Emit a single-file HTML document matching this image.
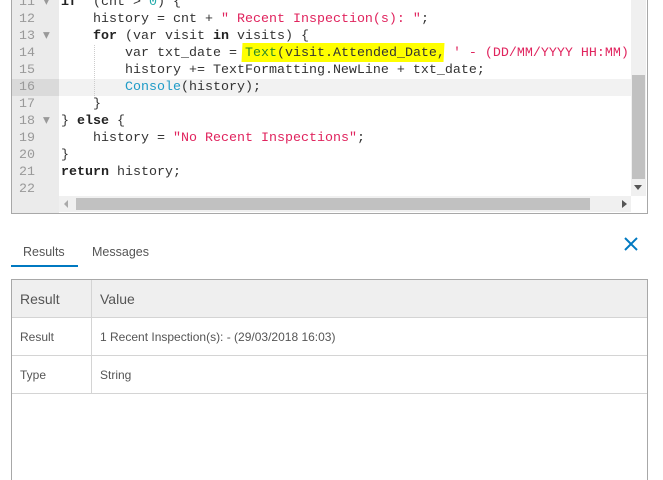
<!DOCTYPE html>
<html><head><style>
body{margin:0;width:663px;height:472px;background:#fff;position:relative;overflow:hidden;font-family:"Liberation Sans",sans-serif}
.ed{position:absolute;left:11px;top:-10px;width:635px;height:223px;border:1px solid #a8a8a8;border-top:none;background:#fff;overflow:hidden}
.gut{position:absolute;left:0;top:0;width:47px;height:223px;background:#ebebeb}
.ln{position:absolute;left:0;width:47px;height:17px;font:13.33px/17px "Liberation Mono",monospace;color:#999;text-indent:7px}
.cl{position:absolute;left:49px;height:17px;font:13.33px/17px "Liberation Mono",monospace;color:#333;white-space:pre}
b{font-weight:bold;color:#222}
.s{color:#e0245e}.f{color:#1e9bc7}.g{color:#2a8a2a}
.hl{position:absolute;left:230px;top:53px;width:202px;height:19px;background:#ffff00;transform:skewX(-3deg)}
.vs{position:absolute;left:619px;top:0;width:15px;height:206px;background:#f0f0f0}
.hs{position:absolute;left:47px;top:206px;width:572px;height:16px;background:#f0f0f0}
.tab{position:absolute;top:245px;font-size:12.5px;color:#555}
td{border:1px solid #d4d4d4;padding:0 0 0 8px;font-size:12px;color:#555;height:37px}
</style></head><body>
<div class="ed">
<div class="gut"></div>
<div style="position:absolute;left:0;top:89px;width:47px;height:17px;background:#dadada"></div>
<div style="position:absolute;left:47px;top:89px;width:572px;height:17px;background:#f2f2f2"></div>
<div class="hl"></div>
<div style="position:absolute;left:82px;top:55px;width:1px;height:51px;border-left:1px dotted #ccc"></div>
<div class="ln" style="top:4px">11 ▾</div><div class="cl" style="top:4px"><b>if</b>  (cnt &gt; <span style="color:#2aa">0</span>) {</div>
<div class="ln" style="top:21px">12</div><div class="cl" style="top:21px">    history = cnt + <span class="s">" Recent Inspection(s): "</span>;</div>
<div class="ln" style="top:38px">13 ▾</div><div class="cl" style="top:38px">    <b>for</b> (var visit <b>in</b> visits) {</div>
<div class="ln" style="top:55px">14</div><div class="cl" style="top:55px">        var txt_date = <span class="g">Text</span>(visit.Attended_Date, <span class="s">' - (DD/MM/YYYY HH:MM)</span></div>
<div class="ln" style="top:72px">15</div><div class="cl" style="top:72px">        history += TextFormatting.NewLine + txt_date;</div>
<div class="ln" style="top:89px">16</div><div class="cl" style="top:89px">        <span class="f">Console</span>(history);</div>
<div class="ln" style="top:106px">17</div><div class="cl" style="top:106px">    }</div>
<div class="ln" style="top:123px">18 ▾</div><div class="cl" style="top:123px">} <b>else</b> {</div>
<div class="ln" style="top:140px">19</div><div class="cl" style="top:140px">    history = <span class="s">"No Recent Inspections"</span>;</div>
<div class="ln" style="top:157px">20</div><div class="cl" style="top:157px">}</div>
<div class="ln" style="top:174px">21</div><div class="cl" style="top:174px"><b>return</b> history;</div>
<div class="ln" style="top:191px">22</div>
<div class="vs"><div style="position:absolute;left:1px;top:85px;width:13px;height:104px;background:#c1c1c1"></div><div style="position:absolute;left:3px;top:195px;border:4px solid transparent;border-top:5px solid #555;border-bottom:none"></div></div>
<div class="hs"><div style="position:absolute;left:17px;top:2px;width:514px;height:12px;background:#c1c1c1"></div><div style="position:absolute;left:5px;top:4px;border:4px solid transparent;border-right:4px solid #aaa;border-left:none"></div><div style="position:absolute;left:563px;top:4px;border:4px solid transparent;border-left:5px solid #555;border-right:none"></div></div>
</div>
<div class="tab" style="left:23px">Results</div>
<div style="position:absolute;left:11px;top:265px;width:67px;height:2px;background:#0079c1"></div>
<div class="tab" style="left:92px">Messages</div>
<svg style="position:absolute;left:623px;top:236px" width="16" height="16"><path d="M2 2L14 14M14 2L2 14" stroke="#0079c1" stroke-width="2"/></svg>
<div style="position:absolute;left:11px;top:279px;width:635px;height:200px;border:1px solid #a8a8a8;border-bottom:none"></div>
<table style="position:absolute;left:12px;top:280px;width:635px;border-collapse:collapse">
<tr style="background:#efefef"><td style="width:71px;font-size:14px;border-top:none;border-left:none">Result</td><td style="font-size:14px;border-top:none;border-right:none">Value</td></tr>
<tr><td style="border-left:none">Result</td><td style="border-right:none">1 Recent Inspection(s): - (29/03/2018 16:03)</td></tr>
<tr><td style="border-left:none">Type</td><td style="border-right:none">String</td></tr>
</table>
</body></html>
